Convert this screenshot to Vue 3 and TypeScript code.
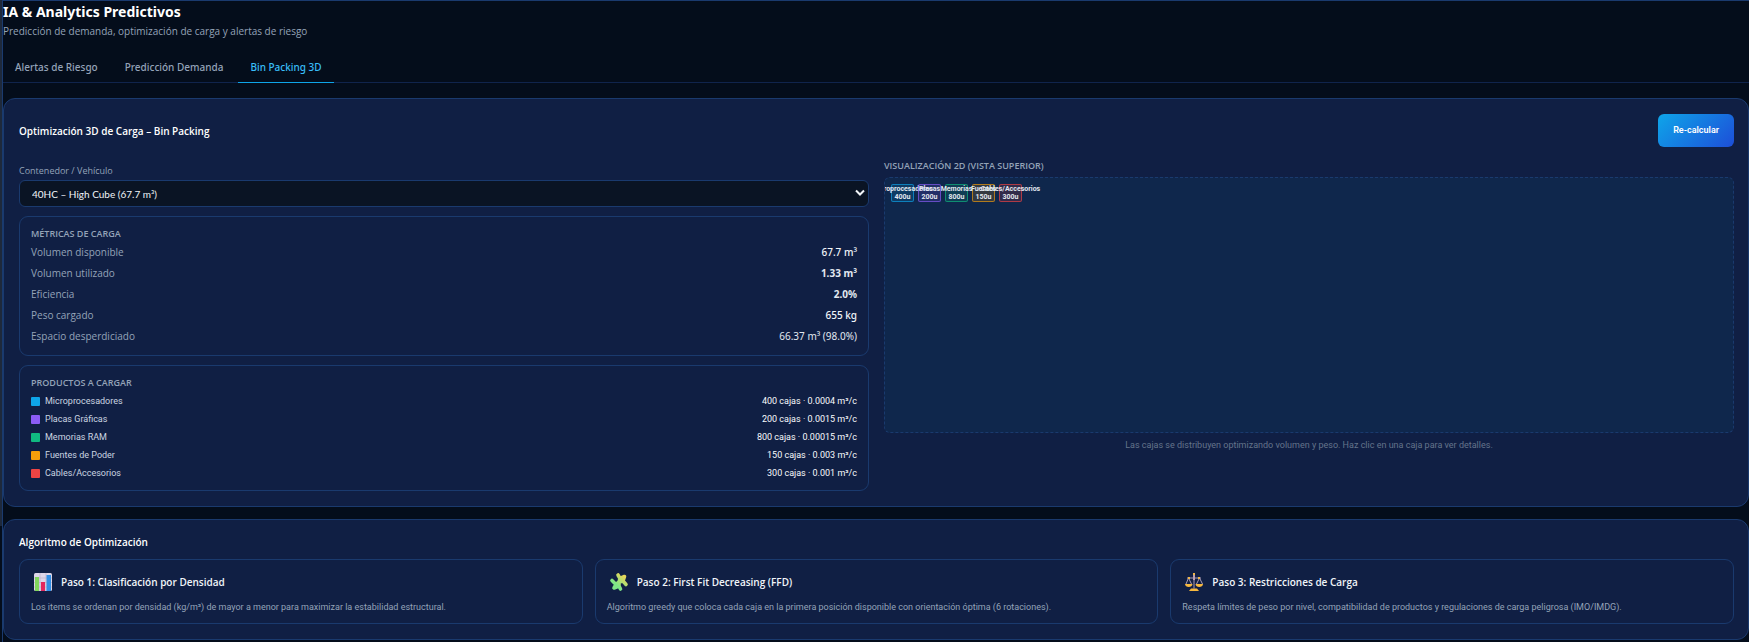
<script setup lang="ts">
import { computed, ref } from 'vue'

interface Container { id: string; label: string; volume: number }
interface Product { name: string; units: number; volume: string; unitVolume: number; tone: string }

const tabs = ['Alertas de Riesgo', 'Predicción Demanda', 'Bin Packing 3D']
const activeTab = ref('Bin Packing 3D')

const containers: Container[] = [{ id: '40HC', label: '40HC – High Cube (67.7 m³)', volume: 67.7 }]
const selected = ref('40HC')

const products: Product[] = [
  { name: 'Microprocesadores', units: 400, volume: '0.0004', unitVolume: 0.0004, tone: 'sky' },
  { name: 'Placas Gráficas', units: 200, volume: '0.0015', unitVolume: 0.0015, tone: 'violet' },
  { name: 'Memorias RAM', units: 800, volume: '0.00015', unitVolume: 0.00015, tone: 'green' },
  { name: 'Fuentes de Poder', units: 150, volume: '0.003', unitVolume: 0.003, tone: 'amber' },
  { name: 'Cables/Accesorios', units: 300, volume: '0.001', unitVolume: 0.001, tone: 'red' },
]

const metrics = computed(() => {
  const total = containers.find((c) => c.id === selected.value)!.volume
  const used = products.reduce((sum, p) => sum + p.units * p.unitVolume, 0)
  const ratio = (used / total) * 100
  return [
    { label: 'Volumen disponible', value: `${total} m³`, weight: 'medium' },
    { label: 'Volumen utilizado', value: `${used.toFixed(2)} m³`, weight: 'strong' },
    { label: 'Eficiencia', value: `${ratio.toFixed(1)}%`, weight: 'strong' },
    { label: 'Peso cargado', value: '655 kg', weight: 'medium' },
    { label: 'Espacio desperdiciado', value: `${(total - used).toFixed(2)} m³ (${(100 - ratio).toFixed(1)}%)`, weight: 'plain' },
  ]
})

const steps = [
  { icon: 'chart', title: 'Paso 1: Clasificación por Densidad', text: 'Los items se ordenan por densidad (kg/m³) de mayor a menor para maximizar la estabilidad estructural.' },
  { icon: 'puzzle', title: 'Paso 2: First Fit Decreasing (FFD)', text: 'Algoritmo greedy que coloca cada caja en la primera posición disponible con orientación óptima (6 rotaciones).' },
  { icon: 'scale', title: 'Paso 3: Restricciones de Carga', text: 'Respeta límites de peso por nivel, compatibilidad de productos y regulaciones de carga peligrosa (IMO/IMDG).' },
]
</script>

<template>
  <div class="shell">
    <div class="rail"><div class="thumb"></div></div>
    <main class="page">
      <header class="heading">
        <h1>IA &amp; Analytics Predictivos</h1>
        <p>Predicción de demanda, optimización de carga y alertas de riesgo</p>
      </header>

      <nav class="tabs">
        <button v-for="tab in tabs" :key="tab" type="button" class="tab" :class="{ active: tab === activeTab }" @click="activeTab = tab">{{ tab }}</button>
      </nav>

      <section class="card">
        <div class="card-head">
          <h2>Optimización 3D de Carga – Bin Packing</h2>
          <button type="button" class="primary">Re-calcular</button>
        </div>
        <div class="columns">
          <div class="column">
            <div class="field">
              <label for="container">Contenedor / Vehículo</label>
              <div class="select">
                <select id="container" v-model="selected">
                  <option v-for="c in containers" :key="c.id" :value="c.id">{{ c.label }}</option>
                </select>
                <svg viewBox="0 0 10 8" aria-hidden="true"><path d="M1 1.5 5 5.5 9 1.5" /></svg>
              </div>
            </div>
            <div class="panel metrics">
              <h3>MÉTRICAS DE CARGA</h3>
              <dl>
                <div v-for="m in metrics" :key="m.label">
                  <dt>{{ m.label }}</dt>
                  <dd :class="m.weight">{{ m.value }}</dd>
                </div>
              </dl>
            </div>
            <div class="panel products">
              <h3>PRODUCTOS A CARGAR</h3>
              <ul>
                <li v-for="p in products" :key="p.name">
                  <span class="swatch" :class="p.tone"></span>
                  <span>{{ p.name }}</span>
                  <strong>{{ p.units }} cajas · {{ p.volume }} m³/c</strong>
                </li>
              </ul>
            </div>
          </div>

          <div class="column view">
            <h3>VISUALIZACIÓN 2D (VISTA SUPERIOR)</h3>
            <div class="floor">
              <div v-for="p in products" :key="p.name" class="box" :class="p.tone">
                <span>{{ p.name.split(' ')[0] }}</span>
                <span>{{ p.units }}u</span>
              </div>
            </div>
            <p class="caption">Las cajas se distribuyen optimizando volumen y peso. Haz clic en una caja para ver detalles.</p>
          </div>
        </div>
      </section>

      <section class="card">
        <h2>Algoritmo de Optimización</h2>
        <div class="steps">
          <article v-for="s in steps" :key="s.icon" class="panel step">
            <div class="step-head">
              <svg v-if="s.icon === 'chart'" viewBox="0 0 18 18" aria-hidden="true">
                <rect width="18" height="18" rx="1.5" fill="#ddd6e8" />
                <path d="M0 5h18M0 9.500h18M0 14h18M6 0v18M12 0v18" stroke="#bcb2cc" stroke-width=".7" />
                <rect x="1" y="4" width="4" height="14" fill="#82d65c" />
                <rect x="7" y="9" width="4" height="9" fill="#e2275e" />
                <rect x="12.500" y="2" width="4.500" height="16" fill="#318fe6" />
              </svg>
              <svg v-else-if="s.icon === 'puzzle'" viewBox="0 0 18 18" aria-hidden="true">
                <defs><linearGradient id="puzzle-fill" gradientUnits="userSpaceOnUse" x1="15" y1="2" x2="4" y2="15"><stop offset=".1" stop-color="#e6d65a" /><stop offset=".75" stop-color="#7fe586" /></linearGradient></defs>
                <g fill="none" stroke="url(#puzzle-fill)" stroke-width="3.600" stroke-linecap="round" stroke-linejoin="round">
                  <path d="M8 2 10 5.500 14.500 3.500 13 8 16 11.500M13 8 9 9 6 11.500 2 7.500M6 11.500 4 15 9 13 10.500 16M9 9v4M10 5.500 9 9" />
                </g>
              </svg>
              <svg v-else viewBox="0 0 18 18" aria-hidden="true">
                <path d="M9 2v13.500M2 5h14M3.500 5 1 11m2.500-6 3 6m8-6-3 6m3-6 3 6" fill="none" stroke="#a99bb5" />
                <path d="M8 0h2v7H8z" fill="#bc9fb0" />
                <path d="M3 4h2v2H3zM13 4h2v2h-2zM8 0h2v2H8z" fill="#f1b749" />
                <path d="M0 11h7.500c0 4-7.500 4-7.500 0Zm10.500 0H18c0 4-7.500 4-7.500 0ZM6 15.500h6l2 2.500H4Z" fill="#f7b83e" />
              </svg>
              <h3>{{ s.title }}</h3>
            </div>
            <p>{{ s.text }}</p>
          </article>
        </div>
      </section>
    </main>
  </div>
</template>

<style>
body { margin: 0; background: #040d1b; }
</style>

<style scoped>
* { box-sizing: border-box; }
.shell { display: flex; min-height: 100vh; font-family: "Open Sans", "Noto Sans", sans-serif; font-size: 10px; line-height: 16px; color: #f1f5f9; background: #040d1b; }
h1, h2, h3, p, dl, dd, ul { margin: 0; padding: 0; }
button, select { font: inherit; }
.rail { width: 2px; flex: none; background: #040d1b; }
.thumb { height: 82vh; background: #1e293b; }
.page { flex: 1; min-width: 0; border: solid #1a3a6e; border-width: 1px 0 0 1px; }
h1 { font-family: "Noto Sans", sans-serif; font-size: 14px; line-height: 22px; font-weight: 700; color: #fff; }
.heading p { color: #94a3b8; }
.tabs { display: flex; gap: 3px; margin-top: 13px; border-bottom: 1px solid #10244c; }
.tab { padding: 7px 12px; margin-bottom: -1px; border: 0; border-bottom: 1px solid transparent; background: none; color: #94a3b8; font-family: "Noto Sans", sans-serif; font-weight: 500; cursor: pointer; }
.tab.active { color: #38bdf8; border-bottom-color: #0ea5e9; }
.card { margin-top: 15px; padding: 15px 14px 15px 15px; border: 1px solid #1a3a6e; border-radius: 12px; background: #101f44; }
.card + .card { margin-top: 12px; }
.card-head { display: flex; align-items: center; justify-content: space-between; }
h2 { font-size: 10px; line-height: 14px; font-weight: 600; color: #fff; }
.primary { padding: 8px 15px; line-height: 17px; border: 0; border-radius: 6px; color: #fff; font-family: Roboto, sans-serif; font-size: 9px; font-weight: 600; background: linear-gradient(135deg, #0ea5e9, #1d4ed8); cursor: pointer; }
.columns { display: grid; grid-template-columns: 1fr 1fr; gap: 15px; margin-top: 14px; }
.column { display: flex; flex-direction: column; gap: 9px; min-width: 0; }
.field label { display: block; line-height: 19px; font-size: 9px; color: #94a3b8; }
.select { position: relative; }
.select select { display: block; width: 100%; height: 27px; padding: 0 12px; border: 1px solid #1a3a6e; border-radius: 6px; appearance: none; background: #0a1424; color: #f1f5f9; font-family: Lato, sans-serif; }
.select svg { position: absolute; right: 4px; top: 9px; width: 10px; height: 8px; fill: none; stroke: #f1f5f9; stroke-width: 2; pointer-events: none; }
.panel { padding: 8px 11px; border: 1px solid #1a3a6e; border-radius: 9px; }
.panel h3, .view h3 { font-size: 9px; line-height: 17px; font-weight: 600; color: #94a3b8; }
.metrics dl div { display: flex; justify-content: space-between; line-height: 21px; }
dt { color: #94a3b8; }
dd { font-family: "Noto Sans", sans-serif; color: #e2e8f0; }
dd.medium { font-weight: 500; color: #f1f5f9; }
dd.strong { font-weight: 700; }
ul { list-style: none; }
.products ul { margin-top: 1px; }
.products li { display: flex; align-items: center; font-family: Roboto, sans-serif; font-size: 9px; line-height: 18px; color: #cbd5e1; }
.products strong { margin-left: auto; font-weight: 400; color: #f8fafc; }
.swatch { width: 9px; height: 9px; margin-right: 5px; border-radius: 1px; background: var(--tone); }
.sky { --tone: #0ea5e9; }
.violet { --tone: #8b5cf6; }
.green { --tone: #10b981; }
.amber { --tone: #f59e0b; }
.red { --tone: #ef4444; }
.view { gap: 0; }
.view h3 { line-height: 10px; margin-bottom: 6px; }
.floor { display: flex; align-items: flex-start; gap: 4px; height: 256px; padding: 6px; overflow: hidden; border: 1px dashed #1a3a6e; border-radius: 6px; background: #0f274c; }
.box { display: flex; flex-direction: column; align-items: center; width: 23px; height: 18px; border: 1px solid color-mix(in srgb, var(--tone) 65%, transparent); border-radius: 2px; background: color-mix(in srgb, var(--tone) 16%, transparent); font-family: Roboto, sans-serif; font-size: 7px; line-height: 8px; font-weight: 700; color: #e2e8f0; white-space: nowrap; }
.caption { margin-top: 4px; font-family: Roboto, sans-serif; font-size: 9px; text-align: center; color: #64748b; }
.steps { display: grid; grid-template-columns: repeat(3, 1fr); gap: 12px; margin-top: 10px; }
.step-head { display: flex; align-items: center; gap: 9px; padding: 5px 3px 8px; }
.step-head svg { width: 18px; height: 18px; overflow: visible; }
.step h3 { font-size: 10px; color: #f1f5f9; }
.step p { font-family: Roboto, sans-serif; font-size: 9px; color: #94a3b8; }
</style>
